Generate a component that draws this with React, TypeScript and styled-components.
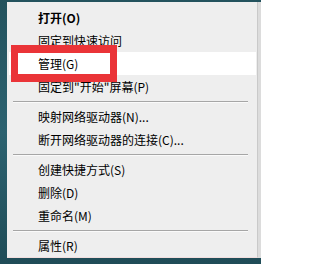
import { createGlobalStyle, styled } from 'styled-components'

type Entry = { label: string; bold?: boolean; hover?: boolean } | 'sep'

const entries: Entry[] = [
  { label: '打开(O)', bold: true },
  { label: '固定到快速访问' },
  { label: '管理(G)', hover: true },
  { label: '固定到"开始"屏幕(P)' },
  'sep',
  { label: '映射网络驱动器(N)...' },
  { label: '断开网络驱动器的连接(C)...' },
  'sep',
  { label: '创建快捷方式(S)' },
  { label: '删除(D)' },
  { label: '重命名(M)' },
  'sep',
  { label: '属性(R)' },
]

const GlobalStyle = createGlobalStyle`
  html, body {
    margin: 0;
    padding: 0;
  }
  body {
    font-family: "Noto Sans CJK SC", "Noto Sans", sans-serif;
  }
`

const App = () => {
  return (
    <>
      <GlobalStyle />
      <StyledDesktop>
        <StyledMenu>
          {entries.map((entry, i) =>
            entry === 'sep' ? (
              <StyledSeparator key={i} />
            ) : (
              <StyledItem key={i} $bold={entry.bold} $hover={entry.hover}>
                {entry.label}
              </StyledItem>
            ),
          )}
          <StyledMark />
        </StyledMenu>
        <StyledEdge />
      </StyledDesktop>
    </>
  )
}

const StyledDesktop = styled.div`
  width: 261px;
  height: 264px;
  display: flex;
  align-items: flex-start;
  padding: 2px 0 0 7px;
  box-sizing: border-box;
  background: linear-gradient(180deg, #23525d 0%, #2c6270 50%, #1f4c57 100%);
  overflow: hidden;
`

const StyledMenu = styled.div`
  position: relative;
  width: 251px;
  height: 256px;
  box-sizing: border-box;
  padding: 4px 1px 0 2px;
  background: #eeeeee;
  border-right: 1px solid #c9c9c9;
  border-bottom: 1px solid #f2dede;
  display: flex;
  flex-direction: column;
`

const StyledEdge = styled.div`
  flex: 1;
  height: 256px;
  background: #dcdcdc;
`

const StyledItem = styled.div<{ $bold?: boolean; $hover?: boolean }>`
  height: 23px;
  line-height: 23px;
  padding-left: 29px;
  font-size: 12px;
  color: #000;
  white-space: nowrap;
  font-weight: ${({ $bold }) => ($bold ? 700 : 400)};
  background: ${({ $hover }) => ($hover ? '#ffffff' : 'transparent')};
`

const StyledSeparator = styled.div`
  height: 7px;
  display: flex;
  align-items: center;
  padding: 0 8px 0 4px;

  &::after {
    content: '';
    flex: 1;
    height: 1px;
    background: #a6a6a6;
    box-shadow: 0 1px 0 #fafafa;
  }
`

const StyledMark = styled.div`
  position: absolute;
  left: 4px;
  top: 43px;
  width: 106px;
  height: 37px;
  box-sizing: border-box;
  border: 7px solid #ea3438;
  border-top-width: 8px;
  border-bottom-width: 8px;
`

export default App
